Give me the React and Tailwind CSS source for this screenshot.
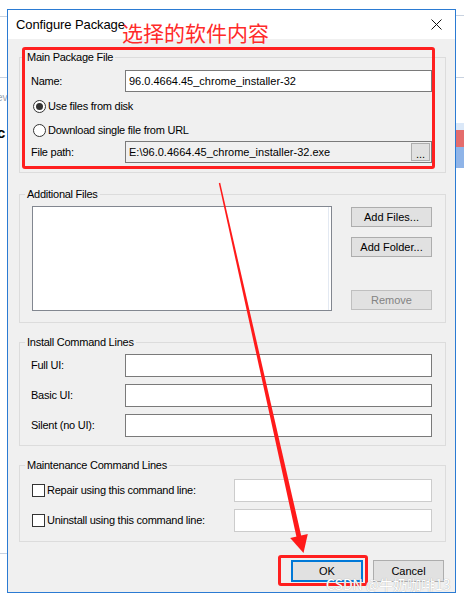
import React from "react";

function Group({ title, className, children }) {
  return (
    <div className={"relative border border-[#dcdcdc] " + className}>
      <span className="absolute left-[5px] -top-[9px] px-[2px] bg-[#f0f0f0] leading-[16px] whitespace-nowrap tracking-[-0.25px]">
        {title}
      </span>
      {children}
    </div>
  );
}

function TextBox({ className, children }) {
  return (
    <div className={"flex items-center border bg-white px-[3px] whitespace-nowrap " + className}>
      {children}
    </div>
  );
}

function Radio({ checked }) {
  return (
    <div className="w-[13px] h-[13px] rounded-full border border-[#333333] bg-white flex items-center justify-center shrink-0">
      {checked && <div className="w-[7px] h-[7px] rounded-full bg-[#333333]" />}
    </div>
  );
}

function Check() {
  return <div className="w-[13px] h-[13px] border border-[#333333] bg-white shrink-0" />;
}

function WinButton({ className, children }) {
  return (
    <div className={"flex items-center justify-center bg-[#e1e1e1] " + className}>{children}</div>
  );
}

export default function App() {
  return (
    <div className="relative w-[464px] h-[601px] bg-white overflow-hidden font-['Liberation_Sans',Arial,sans-serif] text-[11px] text-black">
      {/* background app remnants */}
      <div className="absolute left-0 top-[16px] w-[7px] h-[1px] bg-[#c8d2e0]" />
      <div className="absolute left-0 top-[77px] w-[7px] h-[1px] bg-[#c8d2e0]" />
      <div className="absolute left-0 top-[553px] w-[7px] h-[1px] bg-[#c8d2e0]" />
      <div className="absolute left-0 top-[92px] w-[7px] overflow-hidden">
        <div className="ml-[-3px] text-[10px] leading-[12px] text-[#9aa3ad]">ev</div>
      </div>
      <div className="absolute left-0 top-[125px] w-[7px] overflow-hidden">
        <div className="ml-[-3px] text-[15px] leading-[16px] font-bold text-black">c</div>
      </div>
      <div className="absolute left-[456px] top-[15px] w-[8px] h-[1px] bg-[#c8d2e0]" />
      <div className="absolute left-[456px] top-[77px] w-[8px] h-[1px] bg-[#c8d2e0]" />
      <div className="absolute left-[456px] top-[123px] w-[8px] h-[7px] bg-[#dbe8f8]" />
      <div className="absolute left-[456px] top-[130px] w-[8px] h-[17px] bg-[#e46c6c]" />
      <div className="absolute left-[456px] top-[147px] w-[8px] h-[21px] bg-[#8fb4e8]" />

      <div className="pt-[9px] pl-[7px]">
        <div className="w-[449px] h-[584px] border border-[#2b7bd3] flex flex-col bg-[#f0f0f0]">
          {/* title bar */}
          <div className="h-[29px] bg-white flex items-center pl-[8px] pr-[13px] shrink-0">
            <span className="text-[13px] leading-[16px] mt-[1px] tracking-[-0.1px]">Configure Package</span>
            <svg className="ml-auto" width="11" height="11" viewBox="0 0 11 11">
              <path d="M0.5 0.5 L10.5 10.5 M10.5 0.5 L0.5 10.5" stroke="#111" strokeWidth="1" />
            </svg>
          </div>

          {/* body */}
          <div className="flex-1 flex flex-col pl-[11px] pr-[9px] pt-[18px]">
            <Group title="Main Package File" className="h-[116px]">
              <div className="flex flex-col pl-[11px] pr-[13px] pt-[12px]">
                <div className="flex items-center h-[22px]">
                  <span className="w-[94px] tracking-[-0.25px]">Name:</span>
                  <TextBox className="flex-1 h-[22px] border-[#7a7a7a]">96.0.4664.45_chrome_installer-32</TextBox>
                </div>
                <div className="flex items-center h-[20px] mt-[4px] pl-[2px]">
                  <Radio checked />
                  <span className="ml-[2px] tracking-[-0.25px]">Use files from disk</span>
                </div>
                <div className="flex items-center h-[20px] mt-[4px] pl-[2px]">
                  <Radio />
                  <span className="ml-[2px] tracking-[-0.25px]">Download single file from URL</span>
                </div>
                <div className="flex items-center h-[22px] mt-[1px]">
                  <span className="w-[94px] tracking-[-0.25px]">File path:</span>
                  <div className="flex-1 h-[22px] border border-[#7a7a7a] bg-[#f0f0f0] flex items-center pl-[3px] pr-[1px]">
                    <span className="whitespace-nowrap">{"E:\\96.0.4664.45_chrome_installer-32.exe"}</span>
                    <WinButton className="ml-auto w-[19px] h-[18px] border border-[#adadad] items-end pb-[2px] leading-[8px]">...</WinButton>
                  </div>
                </div>
              </div>
            </Group>

            <Group title="Additional Files" className="h-[129px] mt-[21px]">
              <div className="flex pl-[12px] pr-[13px] pt-[11px]">
                <div className="w-[300px] h-[105px] border border-[#828790] bg-white flex justify-end">
                  <div className="w-[1px] h-full bg-[#e3e9f2] mr-[2px]" />
                </div>
                <div className="ml-auto flex flex-col w-[81px] pt-[1px]">
                  <WinButton className="h-[20px] border border-[#adadad]">Add Files...</WinButton>
                  <WinButton className="h-[20px] mt-[10px] border border-[#adadad]">Add Folder...</WinButton>
                  <WinButton className="h-[20px] mt-[33px] border border-[#bfbfbf] bg-[#cccccc] text-[#838383]">Remove</WinButton>
                </div>
              </div>
            </Group>

            <Group title="Install Command Lines" className="h-[104px] mt-[19px]">
              <div className="flex flex-col gap-[7px] pl-[11px] pr-[13px] pt-[11px]">
                {["Full UI:", "Basic UI:", "Silent (no UI):"].map((l) => (
                  <div key={l} className="flex items-center h-[23px]">
                    <span className="w-[94px] tracking-[-0.25px]">{l}</span>
                    <TextBox className="flex-1 h-[23px] border-[#7a7a7a]" />
                  </div>
                ))}
              </div>
            </Group>

            <Group title="Maintenance Command Lines" className="h-[77px] mt-[19px]">
              <div className="flex flex-col gap-[7px] pl-[12px] pr-[13px] pt-[13px]">
                {["Repair using this command line:", "Uninstall using this command line:"].map((l) => (
                  <div key={l} className="flex items-center h-[23px]">
                    <Check />
                    <span className="ml-[2px] tracking-[-0.25px]">{l}</span>
                    <TextBox className="ml-auto w-[198px] h-[23px] border-[#cccccc]" />
                  </div>
                ))}
              </div>
            </Group>

            <div className="flex justify-end gap-[10px] pr-[2px] mt-[18px]">
              <WinButton className="w-[72px] h-[22px] border-2 border-[#0078d7]">OK</WinButton>
              <WinButton className="w-[71px] h-[22px] border border-[#adadad]">Cancel</WinButton>
            </div>
          </div>
        </div>
      </div>

      {/* annotations */}
      <div className="absolute left-[22px] top-[47px] w-[413px] h-[122px] border-[3px] border-[#ff1f1f] rounded-[3px]" />
      <div className="absolute left-[122px] top-[22px] text-[21px] leading-[21px] text-[#ff2a2a] font-['Noto_Sans_CJK_SC',sans-serif] whitespace-nowrap">
        选择的软件内容
      </div>
      <div className="absolute left-[278px] top-[555px] w-[90px] h-[31px] border-[3px] border-[#ff1f1f] rounded-[3px]" />
      <svg className="absolute left-0 top-0" width="464" height="601" viewBox="0 0 464 601">
        <polygon points="218.8,183.2 220.2,182.8 301.4,536.4 296.6,537.6" fill="#ff1a1a" />
        <polygon points="290.2,538 307.8,534 303.5,553" fill="#ff1a1a" />
      </svg>
      <div className="absolute left-[326px] top-[576px] text-[14px] leading-[16px] text-white font-['Noto_Sans_CJK_SC',sans-serif] whitespace-nowrap [text-shadow:0_0_1px_#9a9a9a]">
        CSDN @牛奶咖啡13
      </div>
    </div>
  );
}
